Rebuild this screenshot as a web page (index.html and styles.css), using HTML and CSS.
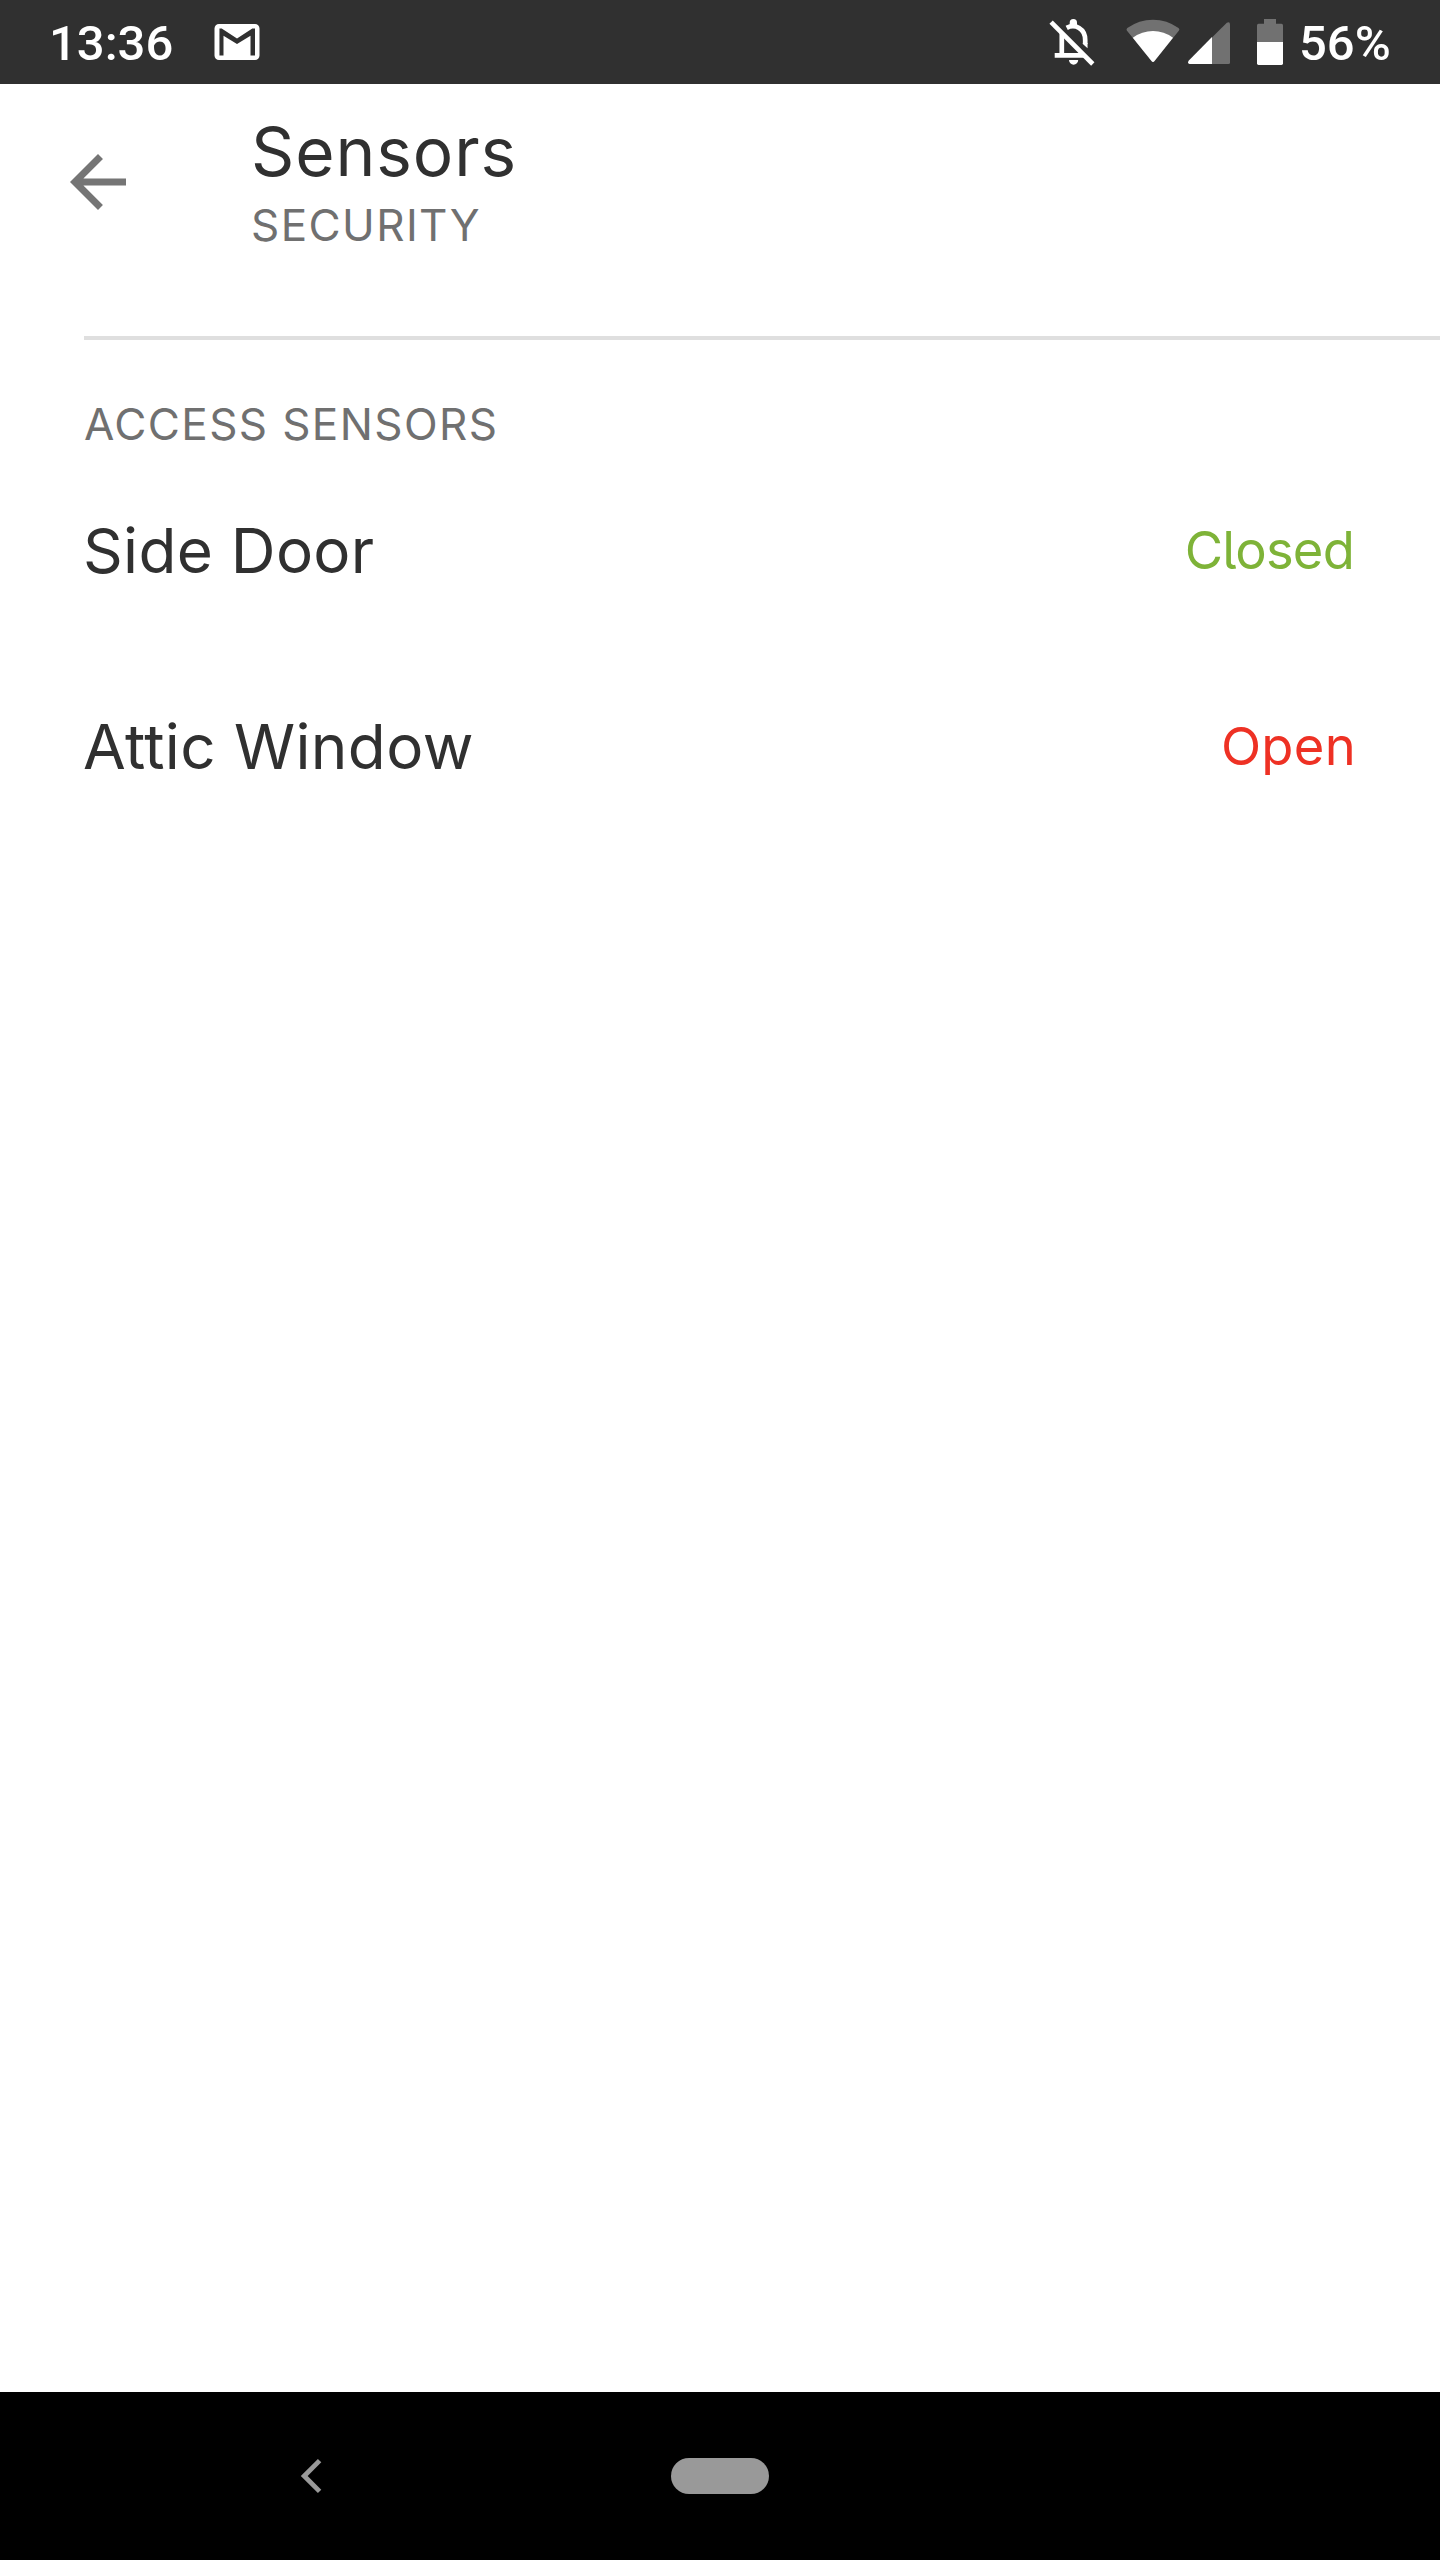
FILE: index.html
```html
<!DOCTYPE html>
<html lang="en">
<head>
<meta charset="utf-8">
<title>Sensors</title>
<link rel="stylesheet" href="styles.css">
</head>
<body>
<div class="screen">
  <div class="status-bar">
    <span class="clock">13:36</span>
    <svg class="mail" viewBox="0 0 24 24"><path fill="#fff" fill-rule="evenodd" d="M4 4h16a2 2 0 0 1 2 2v12a2 2 0 0 1-2 2H4a2 2 0 0 1-2-2V6c0-1.100.9-2 2-2zM20 18V6h-1.200L12 10.400 5.200 6H4.200v12H6V9.200l6 3.700 6-3.700V18z"/></svg>
    <div class="status-icons">
      <svg class="bell" viewBox="0 0 48 48" fill="none" stroke="#fff" stroke-width="4.700">
        <path d="M13.800 15V37M6.700 37.400H36M18.700 9.900C27 5.500 37.200 10.500 37.200 22V26"/>
        <path fill="#fff" stroke="none" d="M34.850 25h4.700v5.300l-4.700-4.200zM21 42h9.200a4.600 4.700 0 0 1-9.200 0zM21.700 8V4.700a3.650 3.650 0 0 1 7.300 0V8z"/>
        <path d="M3.100 4.200L44.800 46"/>
      </svg>
      <svg class="wifi" viewBox="0 0 54 44">
        <path fill="#717171" d="M.8 11.500Q0 10 1.300 9Q13 .7 27 .7T52.500 9Q54 10 53 11.500L28.500 42Q27 43.800 25.500 42z"/>
        <path fill="#fff" d="M6.800 18.700Q16 12 27 12T47 18.700L28.500 42Q27 43.800 25.500 42z"/>
      </svg>
      <svg class="signal" viewBox="0 0 42 42">
        <path fill="#717171" d="M24 15.500L38.800.7Q42-1 42 2.500V40.500Q42 42 40.500 42H24z"/>
        <path fill="#fff" d="M24 15V42H1.500Q-.8 41.300.6 38.700z"/>
      </svg>
      <svg class="battery" viewBox="0 0 26 46">
        <path fill="#717171" d="M7 0H19V4.700H24.500Q26 4.700 26 6.500V23H0V6.500Q0 4.700 1.500 4.700H7z"/>
        <path fill="#fff" d="M0 23H26V44.200Q26 46 24.500 46H1.500Q0 46 0 44.200z"/>
      </svg>
      <span class="percent">56%</span>
    </div>
  </div>

  <header class="app-bar">
    <svg class="back" viewBox="0 0 24 24"><path fill="#757575" d="M20 11H7.830l5.590-5.590L12 4l-8 8 8 8 1.410-1.410L7.830 13H20v-2z"/></svg>
    <div class="titles">
      <h1 class="title">Sensors</h1>
      <div class="subtitle">SECURITY</div>
    </div>
  </header>

  <main class="content">
    <h2 class="section">ACCESS SENSORS</h2>
    <div class="row">
      <span class="name side">Side Door</span>
      <span class="state closed">Closed</span>
    </div>
    <div class="row">
      <span class="name attic">Attic Window</span>
      <span class="state open">Open</span>
    </div>
  </main>

  <nav class="nav-bar">
    <svg class="nav-back" viewBox="0 0 22 36"><path d="M19.600 2.600L4.200 18l15.400 15.400" fill="none" stroke="#999" stroke-width="4.800"/></svg>
    <div class="home"></div>
  </nav>
</div>
</body>
</html>
```
FILE: styles.css
```css
body {
  margin: 0;
  background: #fff;
  font-family: Inter, Roboto, sans-serif;
  font-feature-settings: "cv05";
}

.screen {
  display: flex;
  flex-direction: column;
  width: 1440px;
  height: 2560px;
  overflow: hidden;
}

svg {
  display: block;
  flex: none;
}

.status-bar {
  display: flex;
  align-items: center;
  box-sizing: border-box;
  height: 84px;
  padding: 0 50px 0 49px;
  background: #303030;
  color: #fff;
  font-family: Roboto, "Liberation Sans", sans-serif;
  font-size: 49px;
  font-weight: 500;
  line-height: 84px;
}

.clock {
  width: 161px;
  padding-top: 4px;
  line-height: 80px;
}

.mail {
  width: 54px;
  height: 54px;
}

.status-icons {
  display: flex;
  align-items: center;
  margin-left: auto;
}

.bell {
  width: 48px;
  height: 48px;
  margin-right: 30px;
}

.wifi {
  width: 54px;
  height: 44px;
  margin: 0 8px 3px 0;
}

.signal {
  width: 42px;
  height: 42px;
  margin: 2px 27px 0 0;
}

.battery {
  width: 26px;
  height: 46px;
  margin-right: 16px;
}

.percent {
  width: 91px;
  padding-top: 4px;
  line-height: 80px;
  white-space: nowrap;
}

.app-bar {
  display: flex;
  align-items: flex-start;
  box-sizing: border-box;
  height: 252px;
  padding: 28px 0 0 56px;
}

.back {
  width: 84px;
  height: 84px;
  margin: 28px 111px 0 0;
}

.title {
  margin: 0 0 5px;
  color: #303030;
  font-size: 67.5px;
  font-weight: 400;
  line-height: 80px;
  letter-spacing: 0.9px;
}

.subtitle {
  color: #707070;
  font-size: 44px;
  line-height: 56px;
  letter-spacing: 1.4px;
}

.content {
  flex: 1;
  margin-left: 84px;
  border-top: 4px solid #dfdfdf;
}

.section {
  margin: 56px 0 0;
  color: #707070;
  font-size: 44px;
  font-weight: 400;
  line-height: 56px;
  letter-spacing: 1.4px;
}

.row {
  display: flex;
  align-items: center;
  justify-content: space-between;
  height: 196px;
  padding-right: 84px;
}

.name {
  margin-left: -1px;
  color: #303030;
  font-size: 62px;
}

.side {
  letter-spacing: 0.3px;
}

.attic {
  letter-spacing: 0.4px;
}

.state {
  font-size: 52.5px;
}

.closed {
  margin-right: 2px;
  color: #7eb338;
  letter-spacing: -0.8px;
}

.open {
  color: #ee3124;
  letter-spacing: 0.3px;
}

.nav-bar {
  display: flex;
  align-items: center;
  box-sizing: border-box;
  height: 168px;
  padding-left: 300px;
  background: #000;
}

.nav-back {
  width: 22px;
  height: 36px;
  margin-right: 349px;
}

.home {
  width: 98px;
  height: 36px;
  border-radius: 18px;
  background: #999;
}
```
